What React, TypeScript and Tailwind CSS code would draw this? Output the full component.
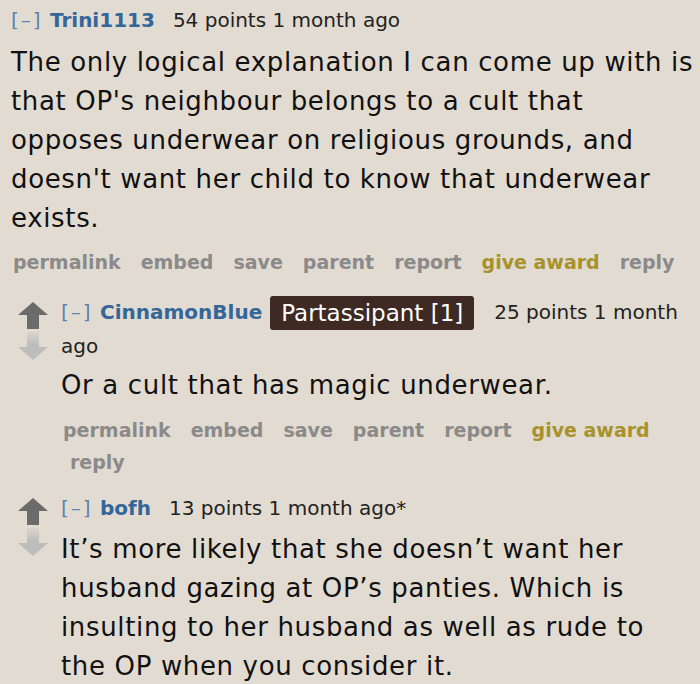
import React from "react";

const font = { fontFamily: '"DejaVu Sans", Verdana, sans-serif' };

const ACTIONS = ["permalink", "embed", "save", "parent", "report"];

const VoteArrows = () => (
  <div className="flex w-[30px] shrink-0 flex-col items-center gap-[3px] pt-[6px]">
    <svg width="30" height="27" viewBox="0 0 30 27">
      <path d="M15 0 L30 13 L21 13 L21 27 L9 27 L9 13 L0 13 Z" fill="#6b6b6b" />
    </svg>
    <svg width="30" height="28" viewBox="0 0 30 28">
      <defs>
        <linearGradient id="fade" x1="0" y1="0" x2="0" y2="1">
          <stop offset="0" stopColor="#c4c4c4" stopOpacity="0.35" />
          <stop offset="0.45" stopColor="#bdbdbd" />
        </linearGradient>
      </defs>
      <path d="M9 0 L21 0 L21 15 L30 15 L15 28 L0 15 L9 15 Z" fill="url(#fade)" />
    </svg>
  </div>
);

const Actions = ({ wrapReply }: { wrapReply?: boolean }) => (
  <div className="flex flex-wrap gap-x-[20px] text-[19px] font-bold leading-[32px] text-[#8a8a8a]">
    {ACTIONS.map((a) => (
      <span key={a}>{a}</span>
    ))}
    <span className="text-[#a8922c]">give award</span>
    <span className={wrapReply ? "ml-[7px]" : ""}>reply</span>
  </div>
);

const Head = ({
  user,
  meta,
  badge,
}: {
  user: string;
  meta: string;
  badge?: string;
}) => (
  <div className="text-[20px] leading-[32px] text-[#222]">
    <span className="tracking-[2px] text-[#5b84b3]">[–]</span>{" "}
    <span className="ml-[1px] font-bold text-[#336699]">{user}</span>
    {badge && (
      <span className="ml-[8px] inline-block rounded-[3px] bg-[#3e2a22] px-[11px] py-[3px] align-[-2px] text-[23px] leading-[28px] text-white">
        {badge}
      </span>
    )}
    <span className={badge ? "ml-[20px]" : "ml-[18px]"} />
    {/* split by word so a wrapped "ago" keeps its own box */}
    {meta.split(" ").map((w, i) => (
      <React.Fragment key={i}>
        {i > 0 && " "}
        <span>{w}</span>
      </React.Fragment>
    ))}
  </div>
);

export default function App() {
  return (
    <div
      className="h-[684px] w-[700px] overflow-hidden bg-[#e2dbd1] text-[#111]"
      style={font}
    >
      {/* TOP COMMENT */}
      <div className="pl-[11px] pr-[4px] pt-[4px]">
        <Head user="Trini1113" meta="54 points 1 month ago" />
        <p className="mt-[7px] text-[26px] leading-[39px] tracking-[0.65px]">
          The only logical explanation I can come up with is that OP's
          neighbour belongs to a cult that opposes underwear on religious
          grounds, and doesn't want her child to know that underwear exists.
        </p>
        <div className="mt-[8px] pl-[2px]">
          <Actions />
        </div>
      </div>

      {/* CHILD COMMENTS */}
      <div className="mt-[18px] flex gap-[13px] pl-[18px] pr-[8px]">
        <VoteArrows />
        <div className="flex-1">
          <Head
            user="CinnamonBlue"
            badge="Partassipant [1]"
            meta="25 points 1 month ago"
          />
          <p className="mt-[4px] text-[26px] leading-[39px] tracking-[0.65px]">
            Or a cult that has magic underwear.
          </p>
          <div className="mt-[9px] pl-[2px]">
            <Actions wrapReply />
          </div>
        </div>
      </div>

      <div className="mt-[14px] flex gap-[13px] pl-[18px] pr-[8px]">
        <VoteArrows />
        <div className="flex-1">
          <Head user="bofh" meta="13 points 1 month ago*" />
          <p className="mt-[6px] text-[26px] leading-[39px] tracking-[0.65px]">
            It’s more likely that she doesn’t want her husband gazing at
            OP’s panties. Which is insulting to her husband as well as rude to
            the OP when you consider it.
          </p>
        </div>
      </div>
    </div>
  );
}
